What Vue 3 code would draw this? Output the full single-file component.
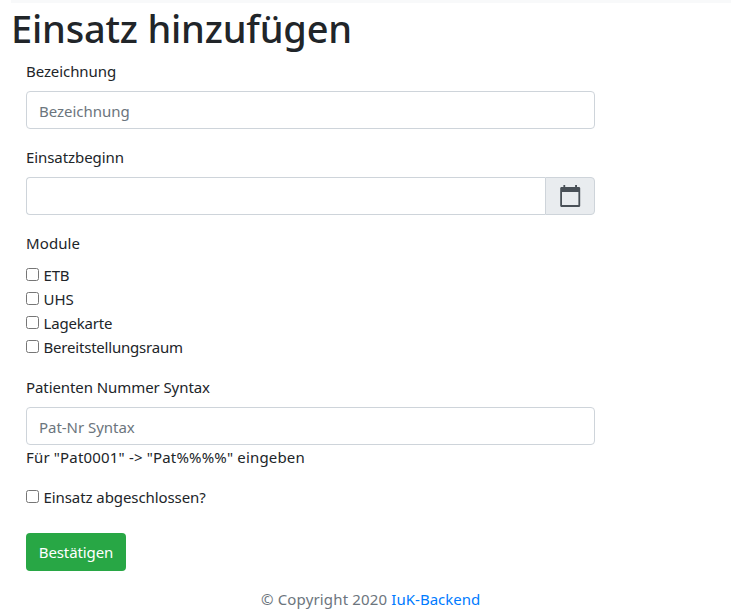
<script setup>
import { ref } from 'vue'

const name = ref('')
const begin = ref('')
const syntax = ref('')
const closed = ref(false)
const selected = ref([])
const modules = ['ETB', 'UHS', 'Lagekarte', 'Bereitstellungsraum']
</script>

<template>
  <div class="page">
    <div class="strip"></div>
    <h1 class="title">Einsatz hinzufügen</h1>
    <form class="form" @submit.prevent>
      <div class="group">
        <label class="label" for="name">Bezeichnung</label>
        <input id="name" v-model="name" class="control" type="text" placeholder="Bezeichnung" />
      </div>
      <div class="group">
        <label class="label" for="begin">Einsatzbeginn</label>
        <div class="input-group">
          <input id="begin" v-model="begin" class="control joined" type="text" />
          <span class="addon">
            <svg width="22" height="24" viewBox="0 0 22 24">
              <path fill="#495057" fill-rule="evenodd" d="M4.4 1h1.8v2h9.9V1H18v2h2.4l.8 1v18l-.8 1H2l-.8-1V4L2 3h2.4zM3 8v13h16.4V8z" />
            </svg>
          </span>
        </div>
      </div>
      <div class="group">
        <span class="label module">Module</span>
        <label v-for="m in modules" :key="m" class="check">
          <input v-model="selected" class="box" type="checkbox" :value="m" />
          <span :class="{ tight: m !== 'UHS' }">{{ m }}</span>
        </label>
      </div>
      <div class="group">
        <label class="label" for="syntax">Patienten Nummer Syntax</label>
        <input id="syntax" v-model="syntax" class="control" type="text" placeholder="Pat-Nr Syntax" />
        <span class="hint">Für "Pat0001" -&gt; "Pat%%%%" eingeben</span>
      </div>
      <label class="check">
        <input v-model="closed" class="box" type="checkbox" />
        <span class="closed">Einsatz abgeschlossen?</span>
      </label>
      <button class="submit" type="submit">Bestätigen</button>
    </form>
    <footer class="footer"><span>© Copyright 2020 <a class="link">IuK-Backend</a></span></footer>
  </div>
</template>

<style>
body {
  margin: 0;
  background: #fff;
}
</style>

<style scoped>
.page,
.page * {
  box-sizing: border-box;
}
.page {
  height: 616px;
  overflow: hidden;
  color: #212529;
  font: 15px/24px "Noto Sans", "Open Sans", sans-serif;
}
.strip {
  height: 3px;
  margin-left: 11px;
  background: #f8f9fa;
}
.title {
  margin: 0 0 7px 11px;
  padding-top: 1px;
  font-size: 38px;
  font-weight: 500;
  line-height: 48px;
  letter-spacing: -0.2px;
  white-space: nowrap;
}
.form {
  display: flex;
  flex-direction: column;
  width: 569px;
  margin-left: 26px;
}
.group {
  display: flex;
  flex-direction: column;
  margin-bottom: 16px;
}
.label {
  margin-bottom: 8px;
  letter-spacing: -0.08px;
}
.module {
  letter-spacing: 0.1px;
}
.control {
  width: 100%;
  height: 38px;
  padding: 8px 12px 6px;
  border: 1px solid #ced4da;
  border-radius: 4px;
  background: #fff;
  color: #495057;
  font: inherit;
  outline: none;
}
.control::placeholder {
  color: #6c757d;
  opacity: 1;
  letter-spacing: -0.03px;
}
.input-group {
  display: flex;
}
.joined {
  flex: 1;
  border-right: 0;
  border-radius: 4px 0 0 4px;
}
.addon {
  display: flex;
  align-items: center;
  justify-content: center;
  width: 50px;
  height: 38px;
  border: 1px solid #ced4da;
  border-radius: 0 4px 4px 0;
  background: #e9ecef;
}
.check {
  display: flex;
  gap: 4.5px;
  height: 24px;
}
.tight {
  letter-spacing: -0.2px;
}
.closed {
  letter-spacing: -0.08px;
}
.box {
  flex: none;
  width: 13px;
  height: 13px;
  margin: 5px 0 0;
}
.hint {
  letter-spacing: 0.17px;
}
.submit {
  align-self: flex-start;
  width: 100px;
  height: 38px;
  margin-top: 24px;
  padding: 0;
  border: 0;
  border-radius: 4px;
  background: #28a745;
  color: #fff;
  font: inherit;
  letter-spacing: -0.1px;
}
.footer {
  margin: 16px 0 0 261px;
  color: #6c757d;
  letter-spacing: 0.16px;
}
.link {
  color: #007bff;
  letter-spacing: 0.02px;
}
</style>
